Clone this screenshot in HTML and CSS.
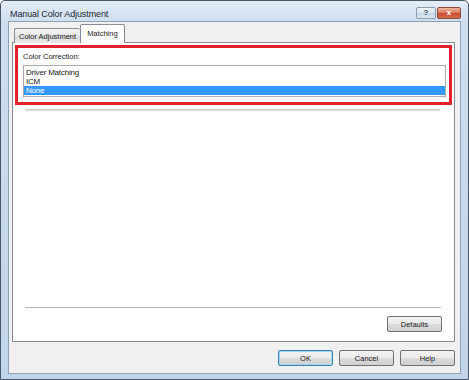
FILE: index.html
```html
<!DOCTYPE html>
<html>
<head>
<meta charset="utf-8">
<link rel="stylesheet" href="styles.css">
</head>
<body>
<div class="window">
  <div class="titlebar">
    <span class="title">Manual Color Adjustment</span>
    <div class="caption">
      <span class="cap cap-help">?</span>
      <span class="cap cap-close">x</span>
    </div>
  </div>
  <div class="client">
    <div class="tabs">
      <span class="tab">Color Adjustment</span>
      <span class="tab tab-active">Matching</span>
    </div>
    <div class="panel">
      <div class="highlight">
        <div class="label"><u>C</u>olor Correction:</div>
        <div class="listbox">
          <div class="item">Driver Matching</div>
          <div class="item">ICM</div>
          <div class="item item-selected">None</div>
        </div>
      </div>
      <div class="shade"></div>
      <div class="spacer"></div>
      <div class="separator"></div>
      <div class="panel-actions">
        <button class="btn">De<u>f</u>aults</button>
      </div>
    </div>
    <div class="actions">
      <button class="btn btn-default">OK</button>
      <button class="btn">Cancel</button>
      <button class="btn">Help</button>
    </div>
  </div>
</div>
</body>
</html>
```
FILE: styles.css
```css
html, body {
  margin: 0;
  padding: 0;
  background: #ffffff;
}
body {
  font-family: "Liberation Sans", Arial, sans-serif;
  color: #1a1a1a;
}
.window {
  width: 469px;
  height: 380px;
  box-sizing: border-box;
  border: 1px solid #4a5866;
  border-radius: 5px 5px 0 0;
  background: linear-gradient(#e3edf7 0px, #cfdeee 20px, #c1d5ea 100%);
  padding: 0 7px 5px 7px;
  display: flex;
  flex-direction: column;
}
.titlebar {
  height: 20px;
  display: flex;
  align-items: flex-start;
  justify-content: space-between;
}
.title {
  font-size: 9px;
  line-height: 10px;
  margin-top: 8px;
  padding-left: 2px;
  color: #1b2a3a;
  letter-spacing: -0.1px;
}
.caption {
  display: flex;
  margin-top: 6px;
  gap: 1px;
}
.cap {
  height: 12px;
  box-sizing: border-box;
  border: 1px solid #8a9cb0;
  border-radius: 2px;
  font-size: 8px;
  line-height: 10px;
  text-align: center;
  font-weight: bold;
}
.cap-help {
  width: 20px;
  background: linear-gradient(#eef3f8, #d6e1ec 50%, #c7d5e4 51%, #dce6f0);
  color: #3a4a5a;
}
.cap-close {
  width: 24px;
  border-color: #8c4a3c;
  background: linear-gradient(#eeb59f, #d9785c 50%, #c7492d 51%, #d86c4c);
  color: #ffffff;
}
.client {
  flex: 1;
  display: flex;
  flex-direction: column;
  background: #f0f0f0;
  border: 1px solid #8da2b8;
  padding: 2px 5px 7px 3px;
  min-height: 0;
}
.tabs {
  display: flex;
  align-items: flex-end;
  height: 19px;
  padding-left: 2px;
  margin-bottom: -1px;
  position: relative;
  z-index: 1;
}
.tab {
  font-size: 7.5px;
  line-height: 13px;
  height: 15px;
  box-sizing: border-box;
  padding: 1px 4px 0 4px;
  border: 1px solid #898c95;
  border-bottom: none;
  border-right: none;
  border-radius: 2px 2px 0 0;
  background: linear-gradient(#f4f4f4, #e6e6e6 50%, #dcdcdc 51%, #e8e8e8);
}
.tab-active {
  height: 19px;
  padding: 2px 6px 0 6px;
  border-right: 1px solid #898c95;
  background: #ffffff;
}
.panel {
  flex: 1;
  display: flex;
  flex-direction: column;
  background: #ffffff;
  border: 1px solid #898c95;
  padding: 2px 2px 9px 2px;
  min-height: 0;
}
.highlight {
  border: 3px solid #e0202a;
  padding: 4px 3px 5px 5px;
}
.label {
  font-size: 7.5px;
  line-height: 10px;
  height: 10px;
  margin-bottom: 3px;
}
.label u {
  text-decoration: none;
}
.listbox {
  border: 1px solid #a9abb2;
  padding: 2px 0 1px 0;
  background: #ffffff;
}
.item {
  font-size: 8px;
  line-height: 9px;
  height: 9px;
  padding-left: 2px;
  letter-spacing: -0.2px;
}
.item-selected {
  background: #3399ff;
  color: #ffffff;
}
.shade {
  height: 2px;
  margin: 4px 12px 0 10px;
  background: #d6d6d6;
}
.spacer {
  flex: 1;
}
.separator {
  height: 1px;
  margin: 0 11px 0 10px;
  background: #b4b4b4;
}
.panel-actions {
  display: flex;
  justify-content: flex-end;
  padding-right: 10px;
  margin-top: 8px;
}
.btn {
  width: 55px;
  height: 16px;
  box-sizing: border-box;
  padding: 0;
  margin: 0;
  font-family: "Liberation Sans", Arial, sans-serif;
  font-size: 7.5px;
  color: #1a1a1a;
  border: 1px solid #707070;
  border-radius: 2px;
  background: linear-gradient(#f2f2f2, #ebebeb 50%, #dddddd 51%, #cfcfcf);
}
.btn u {
  text-decoration: none;
}
.btn-default {
  border-color: #3c7fb1;
  box-shadow: inset 0 0 0 1px #9fd6f0;
}
.actions {
  display: flex;
  justify-content: flex-end;
  gap: 6px;
  margin-top: 8px;
}
```
